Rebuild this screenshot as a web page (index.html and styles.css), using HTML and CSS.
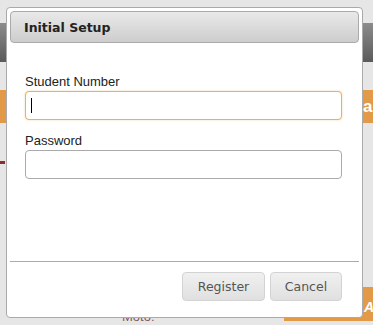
FILE: index.html
```html
<!DOCTYPE html>
<html lang="en">
<head>
    <meta charset="UTF-8">
    <meta name="viewport" content="width=device-width, initial-scale=1.0">
    <title>Initial Setup</title>
    <link rel="stylesheet" href="styles.css">
</head>
<body>
    <!-- Page behind the dialog -->
    <div class="site">
        <div class="site-top"></div>
        <div class="site-nav"></div>
        <div class="site-banner"><span>a</span></div>
        <div class="site-mark"></div>
        <div class="site-footer">
            <div class="site-motto">Moto:</div>
            <div class="site-action">A</div>
        </div>
    </div>

    <!-- Setup dialog -->
    <div class="dialog">
        <div class="dialog-titlebar">
            <span class="dialog-title">Initial Setup</span>
        </div>
        <div class="dialog-content">
            <div class="form-group">
                <label for="student">Student Number</label>
                <div class="field">
                    <input type="text" id="student" class="focused">
                    <span class="caret"></span>
                </div>
            </div>
            <div class="form-group">
                <label for="password">Password</label>
                <div class="field">
                    <input type="password" id="password">
                </div>
            </div>
        </div>
        <div class="dialog-buttons">
            <button class="register">Register</button>
            <button class="cancel">Cancel</button>
        </div>
    </div>
</body>
</html>
```

FILE: styles.css
```css
/* General styles */
body {
    margin: 0;
    padding: 0;
    width: 373px;
    height: 325px;
    overflow: hidden;
    position: relative;
    background-color: #e6e6e6;
    font-family: "Liberation Sans", Arial, sans-serif;
}

/* Page behind the dialog */
.site-top {
    height: 23px;
}
.site-nav {
    height: 39px;
    background: linear-gradient(#8c8c8c, #5a5a5a);
}
.site-banner {
    margin-top: 28px;
    height: 33px;
    background-color: #e29a48;
    color: #fff;
    font-weight: bold;
    font-size: 17px;
    line-height: 33px;
    padding-left: 363px;
    white-space: nowrap;
}
.site-mark {
    margin-top: 38px;
    width: 5px;
    height: 3px;
    background-color: #8b2e2e;
}
.site-footer {
    display: flex;
    margin-top: 123px;
    height: 34px;
}
.site-motto {
    flex: 1;
    padding: 22px 0 0 122px;
    font-size: 13px;
    color: #7e5a5a;
}
.site-action {
    width: 89px;
    background-color: #e29a48;
    color: #fff;
    font-size: 14px;
    font-style: italic;
    font-weight: bold;
    padding: 12px 0 0 80px;
    box-sizing: border-box;
}

/* Dialog */
.dialog {
    position: absolute;
    left: 6px;
    top: 7px;
    width: 357px;
    height: 311px;
    box-sizing: border-box;
    padding: 3px;
    background-color: #fff;
    border: 1px solid #aaa;
    border-radius: 4px;
    display: flex;
    flex-direction: column;
}
.dialog-titlebar {
    height: 32px;
    box-sizing: border-box;
    display: flex;
    align-items: center;
    padding-left: 13px;
    border: 1px solid #aaa;
    border-radius: 4px;
    background: linear-gradient(#e9e9e9, #cdcdcd);
}
.dialog-title {
    font-family: "DejaVu Sans", Verdana, sans-serif;
    font-weight: bold;
    font-size: 12.5px;
    color: #222;
}
.dialog-content {
    flex: 1;
    padding: 31px 17px 0 15px;
}
.form-group {
    margin-bottom: 13px;
}
.form-group label {
    display: block;
    font-size: 13px;
    line-height: 15px;
    color: #222;
    margin-bottom: 2px;
}
.field {
    position: relative;
}
.field input {
    display: block;
    width: 100%;
    height: 29px;
    box-sizing: border-box;
    margin: 0;
    border: 1px solid #aaa;
    border-radius: 4px;
    background-color: #fff;
    outline: none;
}
.field input.focused {
    border-color: #e8b258;
    box-shadow: 0 0 2px rgba(232, 178, 88, 0.6);
}
.caret {
    position: absolute;
    left: 6px;
    top: 7px;
    width: 1px;
    height: 15px;
    background-color: #000;
}
.dialog-buttons {
    display: flex;
    justify-content: flex-end;
    gap: 5px;
    border-top: 1px solid #aaa;
    padding: 10px 17px 13px 0;
}
.dialog-buttons button {
    height: 29px;
    margin: 0;
    border: 1px solid #d3d3d3;
    border-radius: 4px;
    background: linear-gradient(#f0f0f0, #e0e0e0);
    color: #555;
    font-family: "DejaVu Sans", Verdana, sans-serif;
    font-size: 12.5px;
    cursor: pointer;
}
.dialog-buttons .register {
    width: 83px;
}
.dialog-buttons .cancel {
    width: 72px;
}
```
